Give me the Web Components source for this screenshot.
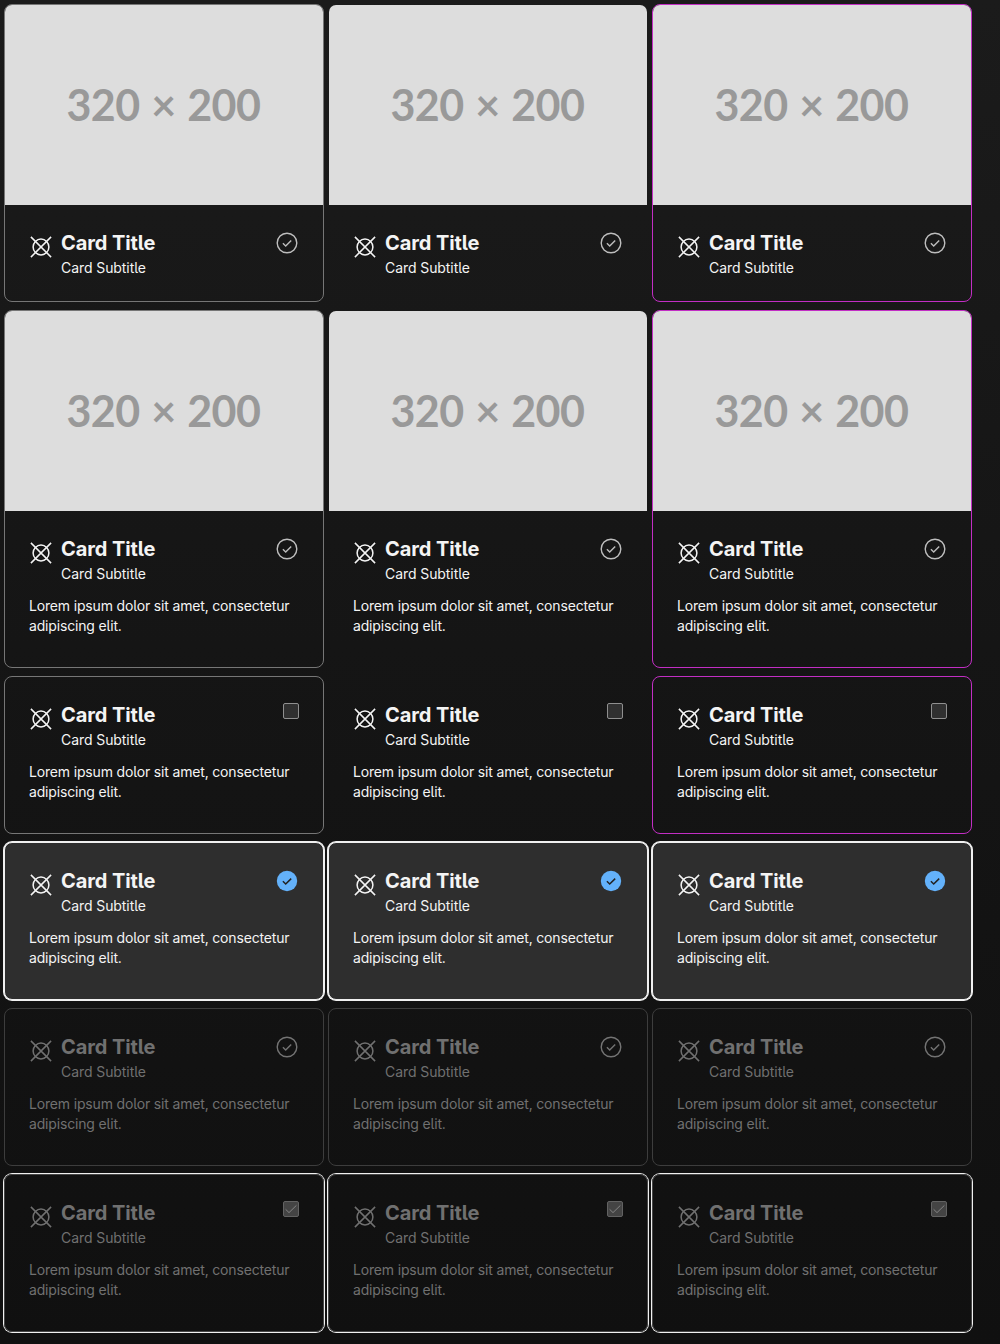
<!DOCTYPE html>
<html lang="en">
<head>
<meta charset="utf-8">
<title>Cards</title>
<style>
html{height:100%}
body{margin:0;min-height:1344px;box-sizing:border-box;background:linear-gradient(180deg,#1b1b1b 0%,#151515 48%,#101010 100%);font-family:Inter,"Liberation Sans",sans-serif;color:#f4f4f4}
</style>
</head>
<body>
<card-gallery></card-gallery>
<script>
class PlaceholderImage extends HTMLElement {
  constructor() {
    super();
    this.attachShadow({mode:'open'}).innerHTML = `
<style>
:host{display:flex;box-sizing:border-box;height:200px;padding:0 1px 2px 0;align-items:center;justify-content:center;background:#ddd;color:#999;font:700 43px/1 Lato,sans-serif;letter-spacing:-.45px;word-spacing:1.4px;white-space:nowrap;overflow:hidden}
</style><span><slot></slot></span>`;
  }
}
customElements.define('placeholder-image', PlaceholderImage);

class CardIcon extends HTMLElement {
  constructor() {
    super();
    this.attachShadow({mode:'open'}).innerHTML = `
<style>:host{display:block;width:24px;height:24px}svg{display:block}</style>
<svg width="24" height="24" viewBox="0 0 24 24" fill="none" stroke="currentColor" stroke-width="1.5"><circle cx="12" cy="12" r="7.9"/><path d="M1.9 1.9 22.1 22.1M22.1 1.9 1.9 22.1"/></svg>`;
  }
}
customElements.define('card-icon', CardIcon);

class SelectMark extends HTMLElement {
  connectedCallback() {
    const box = this.getAttribute('kind') === 'box';
    const on = this.hasAttribute('checked');
    let art;
    if (box) {
      art = `<svg width="16" height="16" viewBox="0 0 16 16" fill="none"><rect x=".5" y=".5" width="15" height="15" rx="1.5" fill="${on ? '#444' : '#303030'}" stroke="${on ? '#626262' : '#8f8f8f'}"/>${on ? '<path d="M2.6 8.3 6 11.6 13.4 4.4" stroke="#858585"/>' : ''}</svg>`;
    } else {
      art = `<svg width="24" height="24" viewBox="0 0 24 24" fill="none">${on
        ? '<circle cx="12" cy="12" r="10.2" fill="#63b1fa"/><path d="M7.9 12.3 10.7 15 16.2 9.6" stroke="#222" stroke-width="1.5"/>'
        : '<circle cx="12" cy="12" r="9.8" stroke="currentColor" stroke-width="1.4"/><path d="M7.9 12.3 10.7 15 16.2 9.6" stroke="currentColor" stroke-width="1.4"/>'}</svg>`;
    }
    this.attachShadow({mode:'open'}).innerHTML = `<style>:host{display:block;color:#bdbdbd}svg{display:block}</style>${art}`;
  }
}
customElements.define('select-mark', SelectMark);

class SelectableCard extends HTMLElement {
  constructor() {
    super();
    this.attachShadow({mode:'open'}).innerHTML = `
<style>
:host{display:block;box-sizing:border-box;width:320px;border:1px solid #767676;border-radius:8px;overflow:hidden;font-feature-settings:"cv05"}
:host([tone=plain]){border-color:transparent}
:host([tone=accent]){border-color:#c22ec4}
:host([state=selected]){background:#2e2e2e;border-color:#f0f0f0;box-shadow:0 0 0 1px #f0f0f0}
:host([state=disabled]){border-color:#3d3d3d}
:host([state=locked]){border-color:#474747;box-shadow:0 0 0 1px #f0f0f0}
.content{padding:24px 24px 23px}
header{display:flex;align-items:flex-start;gap:8px}
.icon{padding-top:6px}
.mark{padding-top:2px}
.heading{flex:1}
.title{font-size:20px;line-height:28px;font-weight:700;letter-spacing:-.1px}
.subtitle,.body{font-size:14px;line-height:20px;font-weight:400;letter-spacing:-.08px}
.subtitle{padding-top:1px}
.body{margin-top:12px;padding-bottom:8px;letter-spacing:-.165px}
:host([compact]) .body{display:none}
:host([state=disabled]) .content,:host([state=locked]) .content{color:#707070}
:host([state=disabled]) ::slotted([slot=mark]){color:#737373}
</style>
<slot name="media"></slot>
<div class="content">
<header><div class="icon"><card-icon></card-icon></div><div class="heading"><div class="title"><slot name="title"></slot></div><div class="subtitle"><slot name="subtitle"></slot></div></div><div class="mark"><slot name="mark"></slot></div></header>
<div class="body"><slot></slot></div>
</div>`;
  }
}
customElements.define('selectable-card', SelectableCard);

class CardGallery extends HTMLElement {
  constructor() {
    super();
    const rows = [
      {media:1, compact:1, kind:'circle'},
      {media:1, kind:'circle'},
      {kind:'box'},
      {kind:'circle', state:'selected', on:1},
      {kind:'circle', state:'disabled'},
      {kind:'box', state:'locked', on:1}
    ];
    const cards = rows.flatMap(r => ['outline','plain','accent'].map(t => `
<selectable-card tone="${t}" ${r.compact ? 'compact' : ''} ${r.state ? `state="${r.state}"` : ''}>
${r.media ? '<placeholder-image slot="media">320 × 200</placeholder-image>' : ''}
<span slot="title">Card Title</span><span slot="subtitle">Card Subtitle</span>
<select-mark slot="mark" kind="${r.kind}" ${r.on ? 'checked' : ''}></select-mark>
${r.compact ? '' : 'Lorem ipsum dolor sit amet, consectetur adipiscing elit.'}
</selectable-card>`)).join('');
    this.attachShadow({mode:'open'}).innerHTML = `
<style>:host{display:grid;grid-template-columns:repeat(3,320px);gap:8px 4px;padding:4px}</style>${cards}`;
  }
}
customElements.define('card-gallery', CardGallery);
</script>
</body>
</html>
